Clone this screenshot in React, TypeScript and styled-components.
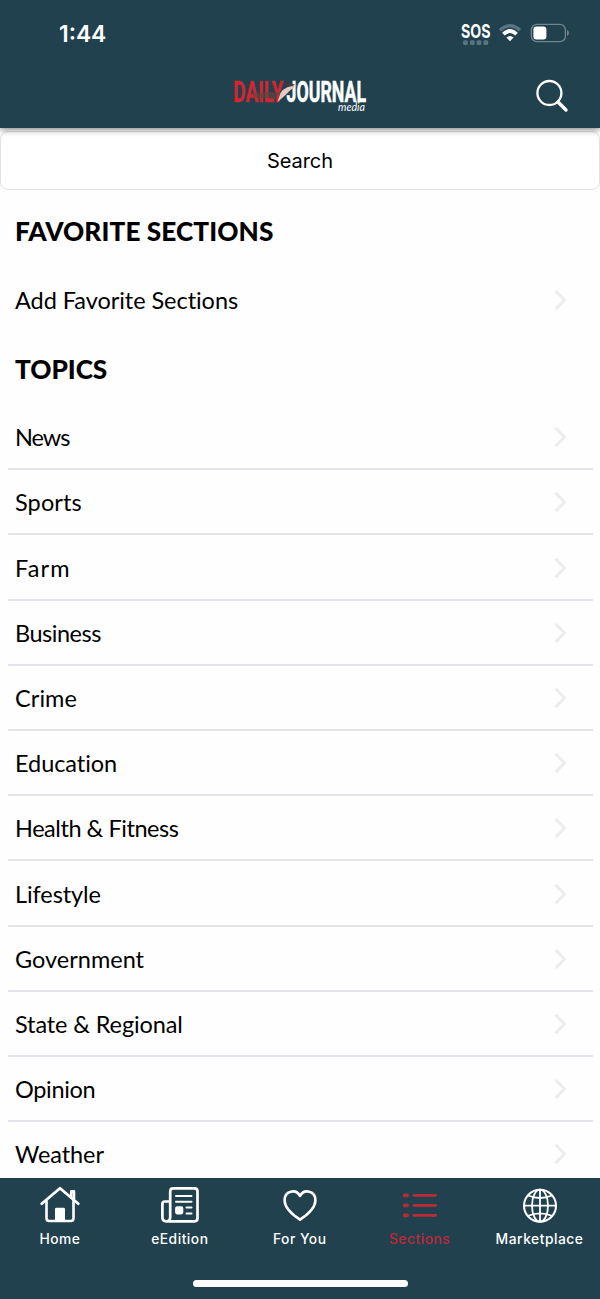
import React from "react";
import styled, { createGlobalStyle } from "styled-components";

const Global = createGlobalStyle`
  * { box-sizing: border-box; }
  body { margin: 0; background: #fff; }
  svg { display: block; flex: none; overflow: visible; }
`;

const navy = "#21414f";
const red = "#be2a34";

const Screen = styled.div`
  width: 600px;
  height: 1299px;
  display: flex;
  flex-direction: column;
  overflow: hidden;
  background: #fefefe;
  color: #000;
  font-family: Inter, sans-serif;
`;

const Header = styled.header`
  flex: none;
  height: 128px;
  background: ${navy};
  box-shadow: 0 1px 7px rgba(0, 0, 0, 0.55);
  z-index: 1;
`;

const StatusBar = styled.div`
  height: 66px;
  display: flex;
  justify-content: space-between;
  padding: 0 30px 0 59px;
  color: #fff;
`;

const Clock = styled.span`
  font-size: 22.8px;
  font-weight: 600;
  line-height: 67px;
`;

const StatusIcons = styled.div`
  display: flex;
  align-items: flex-start;
`;

const TitleBar = styled.div`
  height: 62px;
  display: grid;
  grid-template-columns: 220px 160px 1fr;
`;

const LogoMark = styled.svg`
  margin-top: 4px;
`;

const SearchIcon = styled.svg`
  margin: 10px 0 0 152px;
`;

const StatusGlyph = styled.svg<{ $gap: number }>`
  margin-left: ${(p) => p.$gap}px;
`;

const Content = styled.main`
  flex: 1;
  min-height: 0;
  overflow: hidden;
`;

const SearchButton = styled.button`
  display: block;
  width: 600px;
  height: 59px;
  margin: 3px 0 0;
  padding: 0;
  border: 1px solid #e2e2e2;
  border-radius: 8px;
  background: #fff;
  color: #000;
  font: 400 20px/56px Inter, sans-serif;
  letter-spacing: -0.1px;
`;

const Heading = styled.h2<{ $track: number }>`
  margin: 0;
  height: 77px;
  padding: 0 15px;
  font: 900 26.2px/82px Lato, sans-serif;
  letter-spacing: ${(p) => p.$track}px;
`;

const Row = styled.div<{ $line?: boolean }>`
  height: 65.2px;
  margin: 0 7.5px;
  padding: 1.4px 25px 0 7.5px;
  display: flex;
  align-items: center;
  justify-content: space-between;
  border-bottom: ${(p) => (p.$line ? "2px solid #e3e3eb" : "0")};
`;

const Favorite = styled(Row)`
  height: 61px;
  padding-top: 0;
  margin-top: 2px;
  margin-bottom: -2px;
`;

const Label = styled.span<{ $track: number }>`
  font: 400 23.5px/30px Lato, sans-serif;
  font-variant-ligatures: none;
  letter-spacing: ${(p) => p.$track}px;
  white-space: nowrap;
`;

const TabBar = styled.nav`
  flex: none;
  height: 121px;
  background: ${navy};
`;

const Tabs = styled.div`
  display: grid;
  grid-template-columns: repeat(5, 119.9px);
  height: 102px;
`;

const Tab = styled.div<{ $active?: boolean }>`
  display: flex;
  flex-direction: column;
  align-items: center;
  padding-top: 7px;
  color: ${(p) => (p.$active ? red : "#fff")};
`;

const TabLabel = styled.span`
  margin-top: 3px;
  font: 500 13.8px/18px Inter, sans-serif;
  letter-spacing: 0.52px;
`;

const HomeIndicator = styled.div`
  width: 215px;
  height: 7px;
  margin: 0 auto;
  border-radius: 4px;
  background: #fff;
`;

const Chevron = () => (
  <svg width="15" height="24" viewBox="0 0 15 24" fill="none" stroke="#ededee" strokeWidth="3">
    <path d="M2.5 2.8 11.5 12 2.5 21.2" />
  </svg>
);

const Logo = () => (
  <LogoMark width="160" height="50" viewBox="0 0 160 50">
    <g fontFamily="Roboto, sans-serif" fontWeight="700" fontSize="29" strokeWidth=".5">
      <text x="13.3" y="32.2" textLength="50" lengthAdjust="spacingAndGlyphs" fill="#cf2730" stroke="#cf2730">DAILY</text>
      <text x="66.5" y="32" textLength="79.5" lengthAdjust="spacingAndGlyphs" fill="#fff" stroke="#fff">JOURNAL</text>
    </g>
    <path d="M31 24 46 22 60 22 56 29 46 28 38 29Z" fill="#67423f" opacity=".7" />
    <path d="M77 15.5Q65 15.5 60.5 23L57.5 32 65 25.5Q70 19.5 77 15.5Z" fill="#e6cac1" />
    <path d="m62 13.5 13 .7-2.5 2-9-.4Z" fill="#4b3540" />
    <text x="118" y="41" fontFamily="Lato, sans-serif" fontStyle="italic" fontSize="10.5" textLength="27" lengthAdjust="spacingAndGlyphs" fill="#fff">media</text>
  </LogoMark>
);

const Sos = () => (
  <svg width="30" height="50" viewBox="0 0 30 50">
    <text x="0" y="37.8" fill="#fff" fontFamily="Inter, sans-serif" fontWeight="700" fontSize="19" textLength="29.5" lengthAdjust="spacingAndGlyphs">SOS</text>
    <g fill="#597480">
      {[2.1, 8.9, 15.6, 22.4].map((x) => <rect key={x} x={x} y="40.3" width="4.8" height="4.6" rx="1.5" />)}
    </g>
  </svg>
);

const Wifi = () => (
  <StatusGlyph $gap={7} width="24" height="50" viewBox="0 0 24 50">
    <path d="M2 30.2Q12 21.4 22 30.2" fill="none" stroke="#597480" strokeWidth="3.4" />
    <path d="M5.4 34.2Q12 27.8 18.6 34.2" fill="none" stroke="#fff" strokeWidth="3.7" />
    <path d="M8.4 37.6Q12 34.3 15.6 37.6L12 41.3Z" fill="#fff" />
  </StatusGlyph>
);

const Battery = () => (
  <StatusGlyph $gap={8} width="40" height="50" viewBox="0 0 40 50">
    <rect x="1.4" y="24.4" width="34" height="17.2" rx="5.4" fill="none" stroke="#72858f" strokeWidth="1.3" />
    <rect x="3.4" y="26.6" width="13" height="12.8" rx="3" fill="#fff" />
    <path d="M37 30q2 .8 2 3t-2 3Z" fill="#72858f" />
  </StatusGlyph>
);

const stroke = { fill: "none", stroke: "currentColor", strokeLinecap: "round" as const, strokeLinejoin: "round" as const };

const HomeIcon = () => (
  <svg width="42" height="42" viewBox="0 0 42 42" {...stroke} strokeWidth="2.6">
    <path d="M2.7 18.7 21 3.2l18.3 15.5" strokeWidth="2.8" />
    <path d="M32.2 11.5V6.4h2.8V14" />
    <path d="M7.5 16v17.3q0 2.7 2.7 2.7h21.6q2.7 0 2.7-2.7V16" />
    <path d="M17.3 24h7.4v11h-7.4Z" fill="currentColor" />
  </svg>
);

const NewsIcon = () => (
  <svg width="42" height="42" viewBox="0 0 42 42" {...stroke} strokeWidth="2.7">
    <path d="M11.2 32V6.4q0-3 3-3h21.3q3 0 3 3v26.9q0 3-3 3H7.3q-3.9 0-3.9-3.8V19q0-2.5 2.5-2.5h5.3M11.2 32q0 4.3-3.6 4.3" />
    <path d="M17 11h15.5M17 16.8h15.5M27.5 22.5h5M27.5 28.5h5" strokeWidth="2" />
    <rect x="17.2" y="22.3" width="6" height="6" rx="1" fill="currentColor" strokeWidth="2.2" />
  </svg>
);

const HeartIcon = () => (
  <svg width="42" height="42" viewBox="0 0 42 42" {...stroke} strokeWidth="2.6">
    <path d="M21 34.6C16 31.4 5.6 23.9 5.6 15.3c0-9.4 11.2-12 15.4-4.4 4.2-7.6 15.4-5 15.4 4.4 0 8.6-10.4 16.1-15.4 19.3Z" />
  </svg>
);

const ListIcon = () => (
  <svg width="42" height="42" viewBox="0 0 42 42" {...stroke}>
    {[10.4, 20.4, 30.4].map((y) => (
      <g key={y}>
        <path d={`M5.6 ${y}h2.6`} strokeWidth="3.6" />
        <path d={`M15 ${y}h21.6`} strokeWidth="2.8" />
      </g>
    ))}
  </svg>
);

const GlobeIcon = () => (
  <svg width="42" height="42" viewBox="0 0 42 42" {...stroke} strokeWidth="1.8">
    <circle cx="21" cy="20.7" r="16" strokeWidth="2.1" />
    <ellipse cx="21" cy="20.7" rx="8" ry="16" />
    <path d="M21 4.8v31.8M5.1 20.7h31.8M9 10.5q12 5 24 0M9 30.9q12-5 24 0" />
  </svg>
);

const topics: [string, number][] = [
  ["News", -1], ["Sports", 0.12], ["Farm", 1.15], ["Business", -0.48], ["Crime", 0.1],
  ["Education", -0.05], ["Health & Fitness", -0.45], ["Lifestyle", -0.08],
  ["Government", 0], ["State & Regional", -0.12], ["Opinion", -0.33], ["Weather", -0.08],
];

const tabs = [
  { name: "Home", Icon: HomeIcon },
  { name: "eEdition", Icon: NewsIcon },
  { name: "For You", Icon: HeartIcon },
  { name: "Sections", Icon: ListIcon },
  { name: "Marketplace", Icon: GlobeIcon },
];

export default function App() {
  return (
    <Screen>
      <Global />
      <Header>
        <StatusBar>
          <Clock>1:44</Clock>
          <StatusIcons><Sos /><Wifi /><Battery /></StatusIcons>
        </StatusBar>
        <TitleBar>
          <span />
          <Logo />
          <SearchIcon width="40" height="42" viewBox="0 0 40 42" fill="none" stroke="#fff" strokeLinecap="round">
            <circle cx="17.4" cy="17" r="12" strokeWidth="2.3" />
            <path d="m26 26 8 8" strokeWidth="3.4" />
          </SearchIcon>
        </TitleBar>
      </Header>
      <Content>
        <SearchButton>Search</SearchButton>
        <Heading $track={0.08}>FAVORITE SECTIONS</Heading>
        <Favorite><Label $track={-0.05}>Add Favorite Sections</Label><Chevron /></Favorite>
        <Heading $track={-0.05}>TOPICS</Heading>
        {topics.map(([name, track]) => (
          <Row key={name} $line>
            <Label $track={track}>{name}</Label>
            <Chevron />
          </Row>
        ))}
      </Content>
      <TabBar>
        <Tabs>
          {tabs.map(({ name, Icon }) => (
            <Tab key={name} $active={name === "Sections"}>
              <Icon />
              <TabLabel>{name}</TabLabel>
            </Tab>
          ))}
        </Tabs>
        <HomeIndicator />
      </TabBar>
    </Screen>
  );
}
